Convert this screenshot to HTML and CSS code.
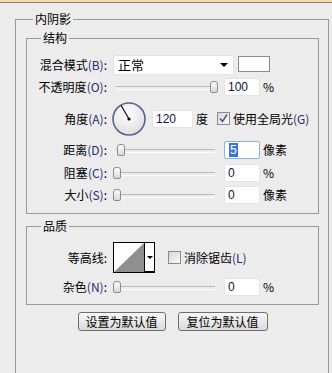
FILE: index.html
```html
<!DOCTYPE html>
<html lang="zh-CN">
<head>
  <meta charset="UTF-8">
  <title>内阴影</title>
  <link rel="stylesheet" href="styles.css">
</head>
<body>
  <div class="topbar"></div>

  <fieldset class="panel">
    <legend>内阴影</legend>

    <fieldset class="group structure">
      <legend>结构</legend>

      <div class="row row-blend">
        <label class="lbl">混合模式<span class="key">(B)</span>:</label>
        <div class="select">
          <span>正常</span>
          <span class="arrow"></span>
        </div>
        <div class="swatch"></div>
      </div>

      <div class="row row-opacity">
        <label class="lbl">不透明度<span class="key">(O)</span>:</label>
        <div class="slider"><span class="thumb" style="left: 97px"></span></div>
        <input class="num" type="text" value="100">
        <span class="unit">%</span>
      </div>

      <div class="row row-angle">
        <label class="lbl">角度<span class="key">(A)</span>:</label>
        <svg class="dial" width="34" height="34" viewBox="0 0 34 34">
          <defs>
            <radialGradient id="dialFill" cx="45%" cy="35%" r="70%">
              <stop offset="0" stop-color="#ffffff"/>
              <stop offset="1" stop-color="#dcdcdc"/>
            </radialGradient>
          </defs>
          <circle cx="17" cy="17" r="16" fill="url(#dialFill)" stroke="#56658c" stroke-width="1.6"/>
          <line x1="17" y1="17" x2="9" y2="3.2" stroke="#000" stroke-width="1.1"/>
          <circle cx="17" cy="17" r="1.6" fill="#000"/>
        </svg>
        <input class="num num-angle" type="text" value="120">
        <span class="unit">度</span>
        <span class="check checked">
          <svg width="11" height="11" viewBox="0 0 11 11"><path d="M2 5.5 L4.5 8.5 L9 1.5" fill="none" stroke="#4c5e8e" stroke-width="1.6"/></svg>
        </span>
        <span class="check-label">使用全局光<span class="key">(G)</span></span>
      </div>

      <div class="row row-distance">
        <label class="lbl">距离<span class="key">(D)</span>:</label>
        <div class="slider"><span class="thumb" style="left: 4px"></span></div>
        <div class="num focus"><span class="sel">5</span></div>
        <span class="unit">像素</span>
      </div>

      <div class="row row-choke">
        <label class="lbl">阻塞<span class="key">(C)</span>:</label>
        <div class="slider"><span class="thumb" style="left: 0px"></span></div>
        <input class="num" type="text" value="0">
        <span class="unit">%</span>
      </div>

      <div class="row row-size">
        <label class="lbl">大小<span class="key">(S)</span>:</label>
        <div class="slider"><span class="thumb" style="left: 0px"></span></div>
        <input class="num" type="text" value="0">
        <span class="unit">像素</span>
      </div>
    </fieldset>

    <fieldset class="group quality">
      <legend>品质</legend>

      <div class="row row-contour">
        <label class="lbl">等高线:</label>
        <div class="contour">
          <svg class="curve" width="30" height="29" viewBox="0 0 30 29">
            <rect width="30" height="29" fill="#fff"/>
            <polygon points="0,29 30,0 30,29" fill="#8f8f8f"/>
          </svg>
          <span class="contour-btn"><span class="arrow small"></span></span>
        </div>
        <span class="check"></span>
        <span class="check-label">消除锯齿<span class="key">(L)</span></span>
      </div>

      <div class="row row-noise">
        <label class="lbl">杂色<span class="key">(N)</span>:</label>
        <div class="slider"><span class="thumb" style="left: 0px"></span></div>
        <input class="num" type="text" value="0">
        <span class="unit">%</span>
      </div>
    </fieldset>

    <div class="buttons">
      <button class="btn btn-set">设置为默认值</button>
      <button class="btn btn-reset">复位为默认值</button>
    </div>
  </fieldset>
</body>
</html>
```

FILE: styles.css
```css
* {
  margin: 0;
  padding: 0;
  box-sizing: border-box;
}

body {
  font-family: "Noto Sans CJK SC", "Liberation Sans", sans-serif;
  font-size: 12px;
  color: #000;
  background: #ececec;
  overflow: hidden;
  height: 373px;
}

.topbar {
  height: 3px;
  background: #f6dcae;
  border-bottom: 1px solid #8e7c62;
}

fieldset {
  border: 1px solid #999;
}

legend {
  font-size: 12px;
  line-height: 14px;
  padding: 0 2px;
}

.panel {
  margin: 9px 3px 0 15px;
  padding: 0 9px 0 10px;
  height: 361px;
  border-bottom: none;
}

.panel > legend {
  margin-left: 7px;
}

.group {
  margin-top: 5px;
  padding: 0 0 0 0;
}

.group > legend {
  margin-left: 14px;
}

.structure {
  padding-top: 10px;
  padding-bottom: 9px;
}

.quality {
  padding-top: 9px;
  padding-bottom: 8px;
}

/* rows */
.row {
  display: flex;
  align-items: center;
  height: 18px;
  line-height: 16px;
}

.row-blend { height: 20px; }
.row-opacity { margin-top: 3px; }
.row-angle { margin-top: 5px; height: 35px; }
.row-distance { margin-top: 5px; }
.row-choke { margin-top: 5px; }
.row-size { margin-top: 4px; }
.row-contour { height: 31px; }
.row-noise { margin-top: 5px; }

.lbl {
  width: 80px;
  margin-right: 6px;
  text-align: right;
  white-space: nowrap;
}

.key {
  color: #1e2d6e;
}

/* select */
.select {
  width: 121px;
  height: 20px;
  background: #fff;
  border: 1px solid #e2e2e2;
  border-radius: 2px;
  display: flex;
  align-items: center;
  justify-content: space-between;
  padding: 0 5px 0 4px;
  font-size: 13px;
}

.arrow {
  width: 0;
  height: 0;
  border-left: 4px solid transparent;
  border-right: 4px solid transparent;
  border-top: 4px solid #000;
}

.arrow.small {
  border-left-width: 3px;
  border-right-width: 3px;
  border-top-width: 3px;
}

.swatch {
  width: 32px;
  height: 16px;
  margin-left: 4px;
  margin-top: -3px;
  background: #fff;
  border: 1px solid #8a8a8a;
}

/* slider */
.slider {
  position: relative;
  width: 106px;
  height: 18px;
}

.slider::before {
  content: "";
  position: absolute;
  left: 3px;
  right: 4px;
  top: 8px;
  height: 2px;
  border-top: 1px solid #b9b9b9;
  border-bottom: 1px solid #fbfbfb;
}

.thumb {
  position: absolute;
  top: 3px;
  width: 8px;
  height: 12px;
  border: 1px solid #8c8c8c;
  border-radius: 3px 3px 2px 2px;
  background: linear-gradient(#fdfdfd, #d8d8d8);
}

/* number fields */
.num {
  width: 36px;
  height: 18px;
  margin-left: 5px;
  border: 1px solid #e4e4e4;
  border-radius: 2px;
  background: #fff;
  padding: 0 3px;
  font-family: "Liberation Sans", sans-serif;
  font-size: 12px;
  color: #10163a;
  line-height: 16px;
  outline: none;
}

.num-angle {
  width: 41px;
}

.focus {
  border: 1px solid #8fb1d8;
  display: flex;
  align-items: center;
  padding-left: 4px;
}

.sel {
  background: #3a74d6;
  color: #fff;
  line-height: 14px;
  padding: 0 1px;
}

.unit {
  margin-left: 3px;
  font-family: "Noto Sans CJK SC", "Liberation Sans", sans-serif;
}

/* angle dial */
.dial {
  margin-left: -1px;
  flex: none;
}

.row-angle .num {
  margin-left: 6px;
}

/* checkbox */
.check {
  width: 13px;
  height: 13px;
  margin-left: 9px;
  border: 1px solid #8a8a8a;
  background: linear-gradient(135deg, #d6d6d6, #fafafa);
  display: flex;
  align-items: center;
  justify-content: center;
}

.check-label {
  margin-left: 3px;
  white-space: nowrap;
}

/* contour */
.contour {
  display: flex;
  width: 42px;
  height: 31px;
  border: 1px solid #000;
  border-bottom-width: 2px;
  background: #fff;
}

.curve {
  display: block;
}

.contour-btn {
  flex: 1;
  border-left: 1px solid #000;
  display: flex;
  justify-content: center;
  padding-top: 13px;
}

.row-contour .check {
  margin-left: 13px;
}

/* buttons */
.buttons {
  display: flex;
  justify-content: center;
  gap: 12px;
  margin-top: 7px;
}

.btn {
  height: 19px;
  border: 1px solid #6e6e6e;
  border-radius: 3px;
  background: linear-gradient(#f7f7f7, #dadada);
  font-family: "Noto Sans CJK SC", sans-serif;
  font-size: 12px;
  line-height: 16px;
  color: #000;
}

.btn-set { width: 88px; }
.btn-reset { width: 90px; }
```
